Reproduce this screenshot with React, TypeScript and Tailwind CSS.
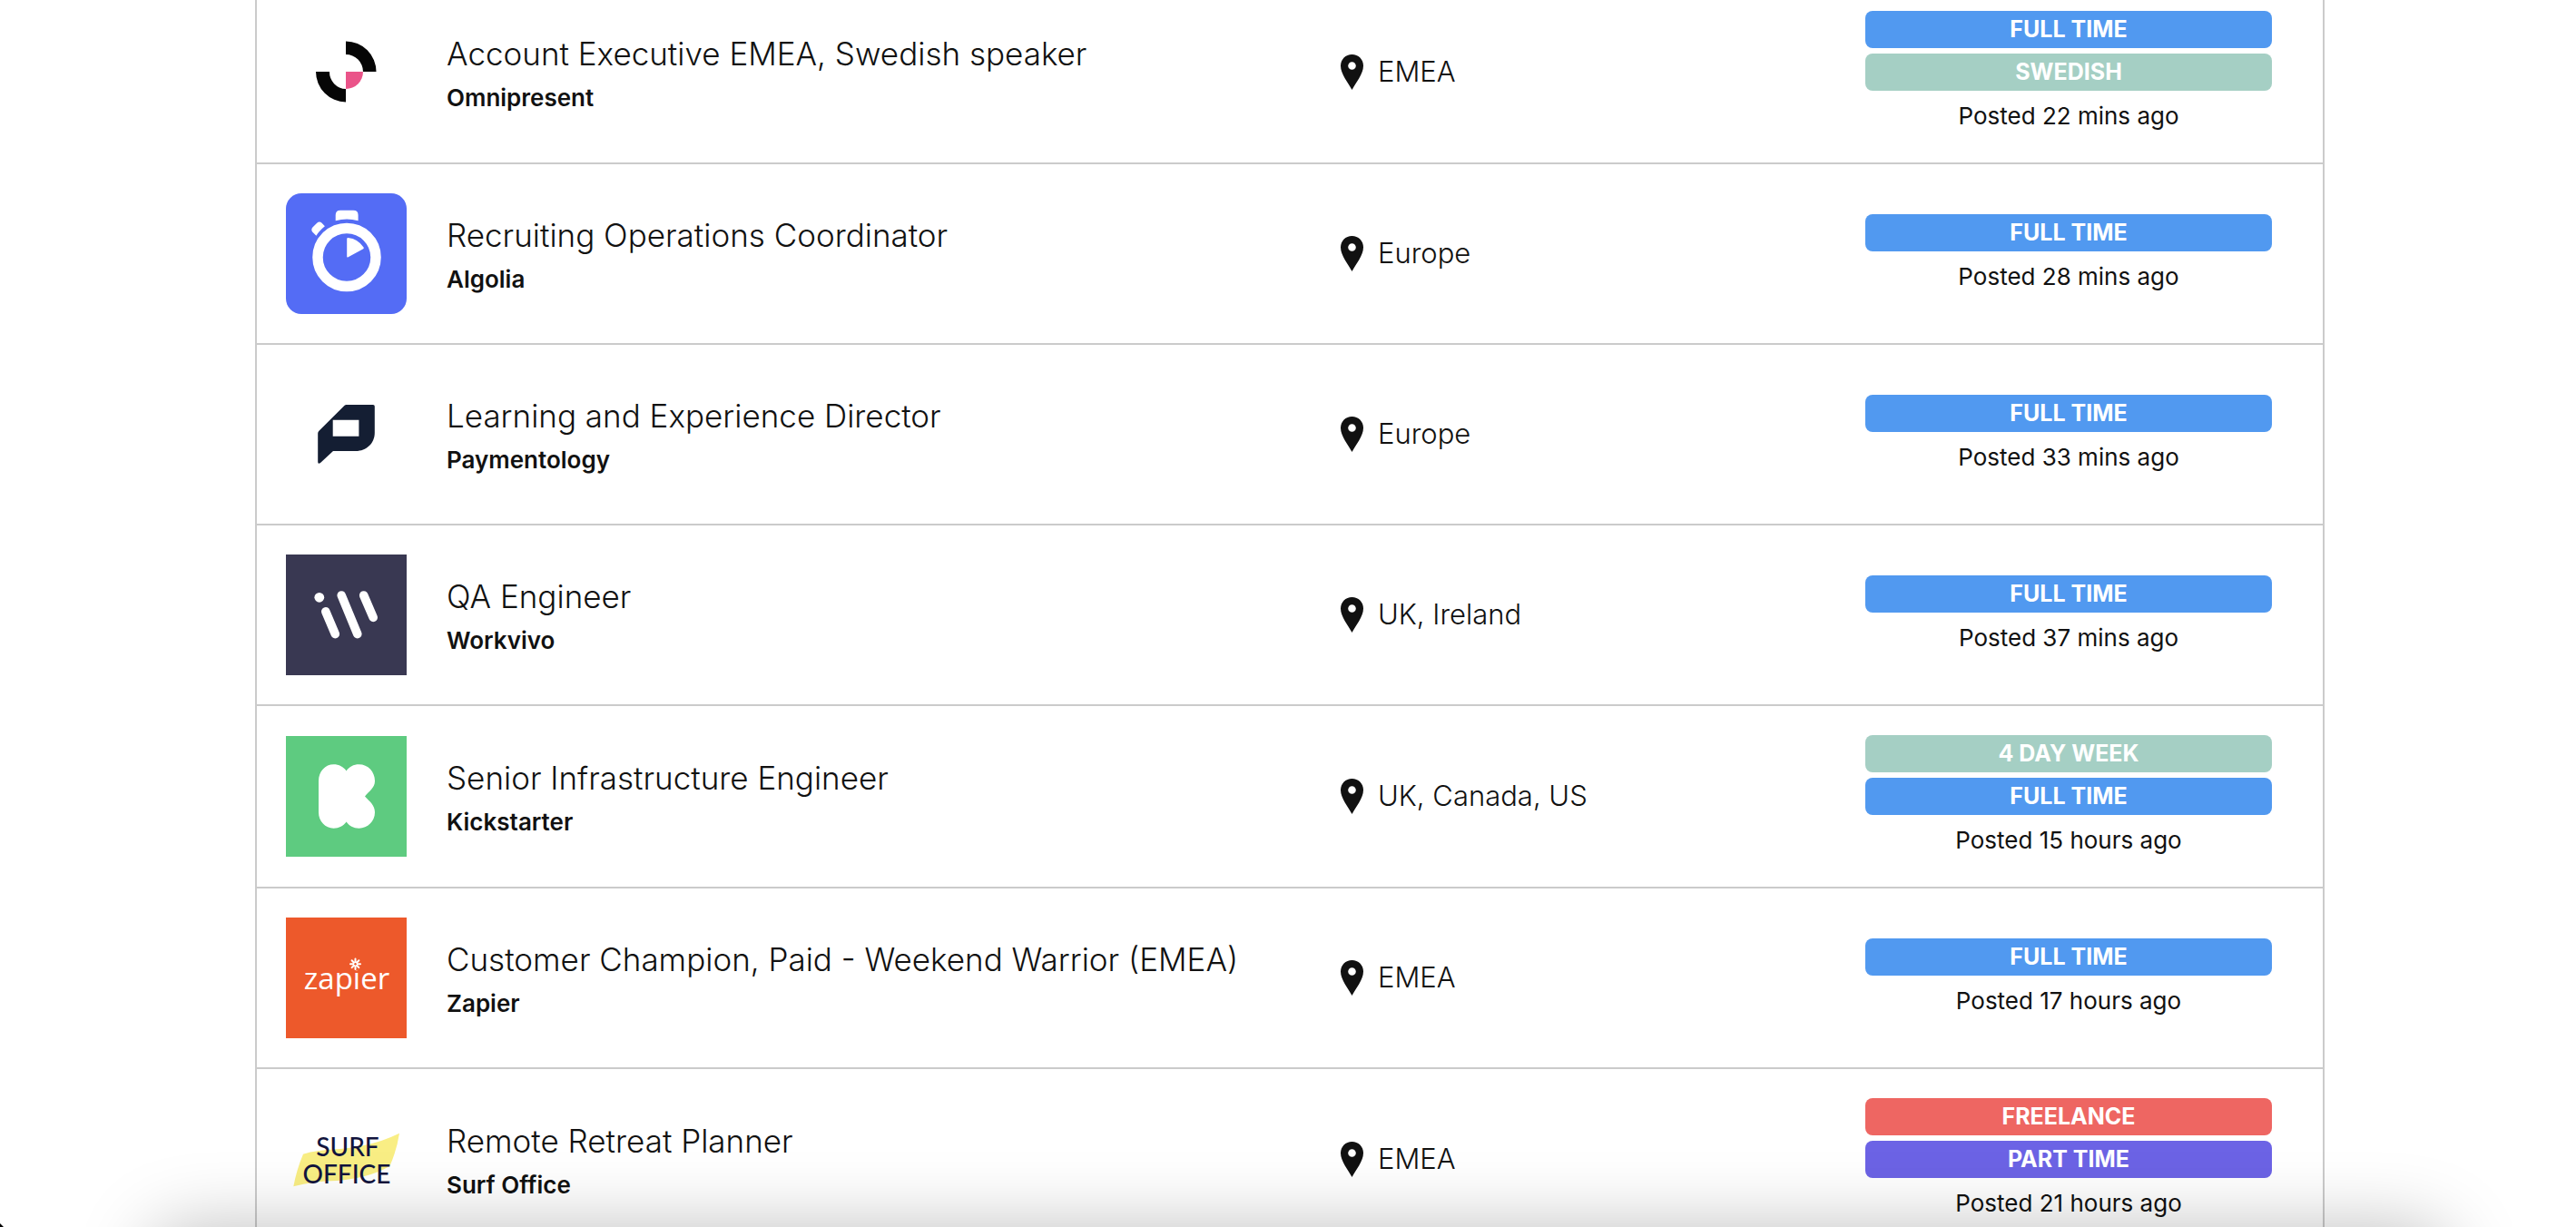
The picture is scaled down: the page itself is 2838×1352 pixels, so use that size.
import type { ReactNode } from 'react';
import clsx from 'clsx';

type TagTone = 'blue' | 'green' | 'red' | 'purple';

type Tag = {
    label: string;
    tone: TagTone;
};

type Job = {
    title: string;
    company: string;
    location: string;
    posted: string;
    tags: Tag[];
    logo: ReactNode;
};

const toneClasses: Record<TagTone, string> = {
    blue: 'bg-[#5199f0]',
    green: 'bg-[#a5cfc4]',
    red: 'bg-[#ee6662]',
    purple: 'bg-[#6c63e5]',
};

const fullTime: Tag = { label: 'FULL TIME', tone: 'blue' };

type LogoProps = {
    name: string;
    className?: string;
    children: ReactNode;
};

const Logo = ({ name, className, children }: LogoProps) => (
    <svg
        viewBox="0 0 133 133"
        role="img"
        aria-label={name}
        className={clsx('size-[133px]', className)}
    >
        {children}
    </svg>
);

const OmnipresentLogo = () => (
    <Logo name="Omnipresent logo">
        <g fill="#060606">
            <path d="M66 32.5A33.5 33.5 0 0 1 99.5 66H85A19 19 0 0 0 66 47Z" />
            <path d="M66 99.5A33.5 33.5 0 0 1 33 66H48A18.5 18.5 0 0 0 66 85Z" />
        </g>
        <path d="M66 66H85A19 19 0 0 1 66 85Z" fill="#ea5489" />
    </Logo>
);

const AlgoliaLogo = () => (
    <Logo name="Algolia logo" className="rounded-[17px] bg-[#546cf5]">
        <circle cx="67" cy="70.5" r="32" fill="none" stroke="#fff" strokeWidth="11.5" />
        <path
            d="M54.7 30.3V24Q54.7 18.7 60 18.7H74.3Q79.6 18.7 79.6 24V30.3Q67 26.5 54.7 30.3Z"
            fill="#fff"
        />
        <path
            d="M33.4 46.7L29.4 42.8Q27.2 40.2 29.4 37.6L34.2 32.8Q36.9 30.4 39.6 32.8L42.9 36.2Q37.2 40.6 33.4 46.7Z"
            fill="#fff"
        />
        <path
            d="M67.2 50.2Q67.2 49 68.4 49Q79.6 50.2 85.6 59.6Q86.2 60.7 85.2 61.2L68.2 70.4Q67.2 70.8 67.2 69.8Z"
            fill="#fff"
        />
    </Logo>
);

const PaymentologyLogo = () => (
    <Logo name="Paymentology logo">
        <path
            fillRule="evenodd"
            d="M66.5 34H96Q97.8 34 97.8 35.8V65C97.8 76.5 88.5 85 77 85H52L38 98Q35.2 99.8 35.2 97V65.5Q35.2 64 36.2 63L64.6 34.8Q65.4 34 66.5 34ZM51.7 50.7V68.7H80.4V50.7Z"
            fill="#141e33"
        />
    </Logo>
);

const WorkvivoLogo = () => (
    <Logo name="Workvivo logo" className="bg-[#393852]">
        <circle cx="36.8" cy="47.3" r="5.4" fill="#fff" />
        <g stroke="#fff" strokeWidth="9.6" strokeLinecap="round">
            <path d="M43.8 62.8L54.3 87.6" />
            <path d="M61.2 45L78.8 87.6" />
            <path d="M85.7 45L96.2 69.4" />
        </g>
    </Logo>
);

const KickstarterLogo = () => (
    <Logo name="Kickstarter logo" className="bg-[#5ecb80]">
        <path
            d="M36 49.5C36 39 43.5 31.3 52.5 31.3C58.5 31.3 63.5 34 66.6 38.5C69.5 34 74.5 31.3 80.5 31.3C90.5 31.3 98 39.5 98 49.5C98 57 92 60.5 87 66.5C92 72 98 76 98 84C98 94 90 101.7 80.5 101.7C74.5 101.7 69.5 99 66.6 94.5C63.5 99 58.5 101.7 52.5 101.7C43.5 101.7 36 94 36 84Z"
            fill="#fff"
        />
    </Logo>
);

const ZapierLogo = () => (
    <Logo name="Zapier logo" className="bg-[#ed592b]">
        <text
            x="67"
            y="79"
            textAnchor="middle"
            fill="#fff"
            className="font-['Open_Sans',sans-serif] text-[33px] font-medium"
        >
            zapier
        </text>
        {/* the starburst takes the place of the dot on the i */}
        <circle cx="76.5" cy="52" r="6.5" fill="#ed592b" />
        <g stroke="#fff" strokeWidth="2" strokeLinecap="round">
            <path d="M76.5 45.5V49M76.5 53.5V57M71 51.2H74.3M78.7 51.2H82M72.6 47.3L75 49.7M78 52.7L80.4 55.1M80.4 47.3L78 49.7M75 52.7L72.6 55.1" />
        </g>
    </Logo>
);

const SurfOfficeLogo = () => (
    <Logo name="Surf Office logo">
        <path
            d="M8.3 96.3Q12 77 19 60.7C40 54 62 57 86 51Q106 47 125 37.7Q122 57 114.3 74C96 84 78 88 56 90Q30 90.5 8.3 96.3Z"
            fill="#f9ee84"
        />
        <g
            textAnchor="middle"
            fill="#12143d"
            className="font-['Lato',sans-serif] text-[28px] font-medium"
        >
            <text x="68" y="63">
                SURF
            </text>
            <text x="67" y="93">
                OFFICE
            </text>
        </g>
    </Logo>
);

const jobs: Job[] = [
    {
        title: 'Account Executive EMEA, Swedish speaker',
        company: 'Omnipresent',
        location: 'EMEA',
        posted: 'Posted 22 mins ago',
        tags: [fullTime, { label: 'SWEDISH', tone: 'green' }],
        logo: <OmnipresentLogo />,
    },
    {
        title: 'Recruiting Operations Coordinator',
        company: 'Algolia',
        location: 'Europe',
        posted: 'Posted 28 mins ago',
        tags: [fullTime],
        logo: <AlgoliaLogo />,
    },
    {
        title: 'Learning and Experience Director',
        company: 'Paymentology',
        location: 'Europe',
        posted: 'Posted 33 mins ago',
        tags: [fullTime],
        logo: <PaymentologyLogo />,
    },
    {
        title: 'QA Engineer',
        company: 'Workvivo',
        location: 'UK, Ireland',
        posted: 'Posted 37 mins ago',
        tags: [fullTime],
        logo: <WorkvivoLogo />,
    },
    {
        title: 'Senior Infrastructure Engineer',
        company: 'Kickstarter',
        location: 'UK, Canada, US',
        posted: 'Posted 15 hours ago',
        tags: [{ label: '4 DAY WEEK', tone: 'green' }, fullTime],
        logo: <KickstarterLogo />,
    },
    {
        title: 'Customer Champion, Paid - Weekend Warrior (EMEA)',
        company: 'Zapier',
        location: 'EMEA',
        posted: 'Posted 17 hours ago',
        tags: [fullTime],
        logo: <ZapierLogo />,
    },
    {
        title: 'Remote Retreat Planner',
        company: 'Surf Office',
        location: 'EMEA',
        posted: 'Posted 21 hours ago',
        tags: [
            { label: 'FREELANCE', tone: 'red' },
            { label: 'PART TIME', tone: 'purple' },
        ],
        logo: <SurfOfficeLogo />,
    },
];

const PinIcon = () => (
    <svg viewBox="0 0 25 39" className="h-[39px] w-[25px] shrink-0" aria-hidden="true">
        <path
            fillRule="evenodd"
            d="M12.5 0C5.5 0 0 5.5 0 12.4C0 21.5 8.3 31 12.5 39C16.7 31 25 21.5 25 12.4C25 5.5 19.5 0 12.5 0ZM12.5 8.2A4.3 4.3 0 1 1 12.5 16.8A4.3 4.3 0 1 1 12.5 8.2Z"
            fill="#111"
        />
    </svg>
);

const JobRow = ({ job }: { job: Job }) => (
    <li className="border-b-2 border-[#cbcbcb]">
        <a
            href="#"
            className="grid grid-cols-[177px_985fr_578fr_448fr] items-center py-8 pr-14 pl-8"
        >
            {job.logo}
            <div>
                <h2 className="text-[35px] leading-[56px] font-light">{job.title}</h2>
                <p className="text-[26px] leading-[42px] font-semibold">{job.company}</p>
            </div>
            <div className="flex items-center gap-4">
                <PinIcon />
                <span className="pb-0.5 text-[31px] leading-10 font-light">
                    {job.location}
                </span>
            </div>
            <div className="text-center">
                <div className="flex flex-col gap-1.5">
                    {job.tags.map((tag) => (
                        <span
                            key={tag.label}
                            className={clsx(
                                'rounded-lg text-[25px] leading-[41px] font-bold text-white',
                                toneClasses[tag.tone],
                            )}
                        >
                            {tag.label}
                        </span>
                    ))}
                </div>
                <p className="pt-2 text-[26px] leading-[39px]">{job.posted}</p>
            </div>
        </a>
    </li>
);

const App = () => (
    <main className="relative h-screen overflow-hidden bg-white pl-1 font-['Inter',sans-serif] text-[#111]">
        {/* list is scrolled a little past the top of its first row */}
        <ul className="mx-auto -mt-5 w-full max-w-[2280px] border-x-2 border-[#cbcbcb]">
            {jobs.map((job) => (
                <JobRow key={job.title} job={job} />
            ))}
        </ul>
        {/* shadow cast upwards from below the window */}
        <div className="pointer-events-none absolute top-full right-[140px] left-[165px] h-40 rounded-t-[40px] shadow-[0_0_80px_rgba(0,0,0,0.25)]" />
        <svg viewBox="0 0 4 4" className="absolute bottom-0 left-0 size-1" aria-hidden="true">
            <path d="M0 0L4 4H0Z" fill="#000" />
        </svg>
    </main>
);

export default App;
